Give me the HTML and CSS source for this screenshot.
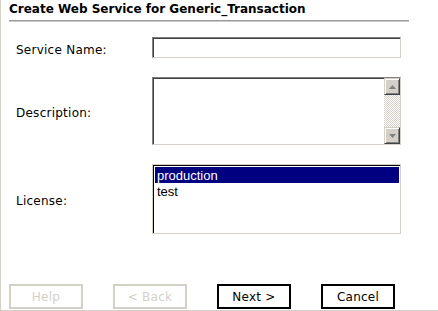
FILE: index.html
```html
<!DOCTYPE html>
<html lang="en">

<head>
    <meta charset="UTF-8">
    <title>Create Web Service</title>
    <link rel="stylesheet" href="styles.css">
</head>

<body>
    <div class="page">
        <div class="header">
            <h1 class="title">Create Web Service for Generic_Transaction</h1>
            <div class="rule"></div>
        </div>

        <form class="form">
            <label class="label" for="service-name">Service Name:</label>
            <input id="service-name" class="field text-field" type="text">

            <label class="label" for="description">Description:</label>
            <div class="field area-box">
                <textarea id="description" class="area"></textarea>
                <div class="scrollbar">
                    <div class="scroll-btn">
                        <svg width="7" height="4" viewBox="0 0 7 4"><polygon points="3.5,0 7,4 0,4" fill="#808080"/></svg>
                    </div>
                    <div class="scroll-track"></div>
                    <div class="scroll-btn">
                        <svg width="7" height="4" viewBox="0 0 7 4"><polygon points="0,0 7,0 3.5,4" fill="#808080"/></svg>
                    </div>
                </div>
            </div>

            <span class="label">License:</span>
            <div class="field listbox" role="listbox">
                <div class="option selected" role="option">production</div>
                <div class="option" role="option">test</div>
            </div>
        </form>

        <div class="buttons">
            <button class="btn" type="button" disabled>Help</button>
            <button class="btn" type="button" disabled>&lt; Back</button>
            <button class="btn" type="button">Next &gt;</button>
            <button class="btn" type="button">Cancel</button>
        </div>
    </div>
</body>

</html>
```

FILE: styles.css
```css
body {
    margin: 0;
    font-family: "DejaVu Sans", Verdana, sans-serif;
    font-size: 12px;
    color: #000;
    background-color: #fff;
}

.page {
    height: 311px;
    box-sizing: border-box;
    border-left: 1px solid #d4d0c8;
    border-bottom: 1px solid #d4d0c8;
    display: flex;
    flex-direction: column;
}

.header {
    padding-left: 8px;
}

.title {
    margin: 0;
    padding-top: 2px;
    font-size: 12px;
    line-height: 15px;
    font-weight: bold;
}

.rule {
    width: 400px;
    margin-top: 3px;
    border-top: 1px solid #999;
    border-bottom: 1px solid #ccc;
}

.form {
    margin-top: 15px;
    padding-left: 15px;
    display: grid;
    grid-template-columns: 136px 249px;
    row-gap: 19px;
    align-items: center;
}

.label {
    padding-top: 4px;
    letter-spacing: 0.25px;
}

.field {
    box-sizing: border-box;
    border: 1px solid;
    border-color: #808080 #d4d0c8 #d4d0c8 #808080;
    box-shadow: inset 1px 1px 0 #404040;
    background-color: #fff;
}

.text-field {
    height: 21px;
    margin: 0;
    padding: 2px 3px;
    font: inherit;
    outline: none;
}

.area-box {
    height: 68px;
    display: flex;
}

.area {
    flex: 1;
    border: none;
    margin: 1px 0 0 1px;
    padding: 2px;
    resize: none;
    font: inherit;
    outline: none;
    background: transparent;
}

.scrollbar {
    width: 16px;
    display: flex;
    flex-direction: column;
}

.scroll-btn {
    height: 17px;
    box-sizing: border-box;
    background-color: #d4d0c8;
    border: 1px solid;
    border-color: #d4d0c8 #404040 #404040 #d4d0c8;
    box-shadow: inset 1px 1px 0 #fff, inset -1px -1px 0 #808080;
    display: flex;
    justify-content: center;
    align-items: center;
}

.scroll-track {
    flex: 1;
    background-image: repeating-conic-gradient(#d4d0c8 0 25%, #fff 0 50%);
    background-size: 2px 2px;
}

.listbox {
    height: 70px;
    border-color: #d4d0c8;
    box-shadow: inset 1px 1px 0 #000;
    padding: 2px 1px 0 2px;
    font-family: "Liberation Sans", Arial, sans-serif;
    font-size: 13px;
}

.option {
    height: 16px;
    line-height: 17px;
    padding-left: 2px;
}

.option.selected {
    background-color: #000080;
    color: #fff;
}

.buttons {
    margin-top: auto;
    padding: 0 0 1px 8px;
    display: flex;
    gap: 30px;
}

.btn {
    width: 74px;
    height: 25px;
    margin: 0;
    padding: 0;
    font: inherit;
    letter-spacing: 0.25px;
    color: #000;
    background-color: #fff;
    border: 2px solid #000;
}

.btn:disabled {
    color: #d4d0c8;
    border-color: #d4d0c8;
}
```
